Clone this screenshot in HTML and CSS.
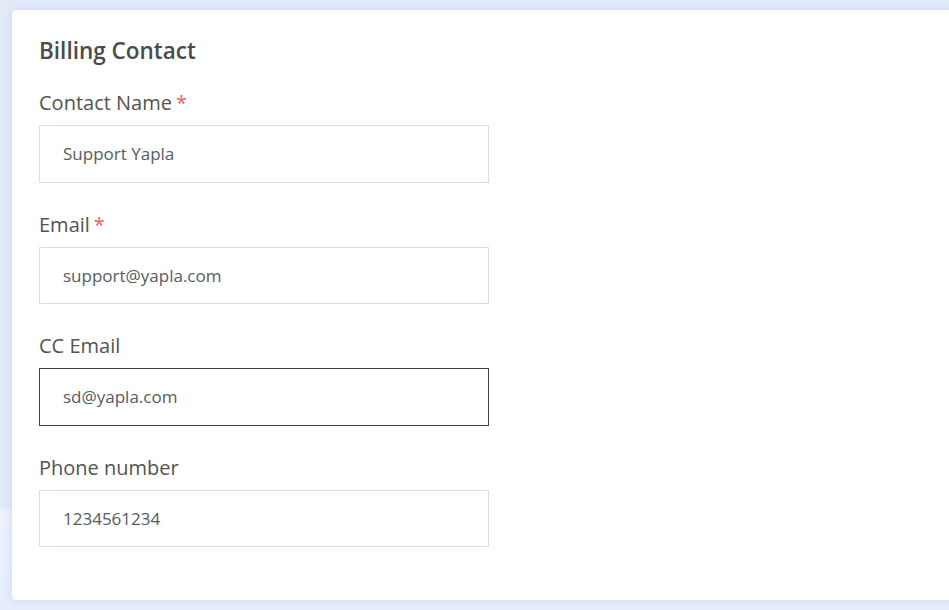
FILE: index.html
```html
<!DOCTYPE html>
<html lang="en">
<head>
<meta charset="utf-8">
<title>Billing Contact</title>
<link rel="stylesheet" href="styles.css">
</head>
<body>
<main class="page">
  <section class="card">
    <h2 class="card-title">Billing Contact</h2>
    <div class="field">
      <label class="field-label">Contact Name<span class="req">*</span></label>
      <div class="input">Support Yapla</div>
    </div>
    <div class="field">
      <label class="field-label">Email<span class="req">*</span></label>
      <div class="input">support@yapla.com</div>
    </div>
    <div class="field">
      <label class="field-label">CC Email</label>
      <div class="input input-focus">sd@yapla.com</div>
    </div>
    <div class="field">
      <label class="field-label">Phone number</label>
      <div class="input">1234561234</div>
    </div>
  </section>
</main>
</body>
</html>
```

FILE: styles.css
```css
html, body {
  margin: 0;
  padding: 0;
  height: 100%;
  overflow: hidden;
}
body {
  background: linear-gradient(180deg, #e4ebf8 0%, #e4ebf8 83%, #edf2fc 84%, #e6edfb 100%);
  font-family: "Open Sans", "Noto Sans", sans-serif;
}
.page {
  padding: 10px 0 0 12px;
}
.card {
  width: 1000px;
  height: 590px;
  box-sizing: border-box;
  background: #fff;
  border-radius: 4px;
  box-shadow: 0 0 8px rgba(150, 175, 225, 0.35);
  padding: 26px 27px 24px 27px;
}
.card-title {
  margin: 0 0 24px 0;
  font-size: 22.5px;
  line-height: 30px;
  font-weight: 600;
  color: #4a4b4d;
}
.field {
  margin-bottom: 29px;
}
.field-label {
  display: block;
  font-size: 20px;
  line-height: 26px;
  font-weight: 500;
  color: #535353;
  margin-bottom: 9px;
}
.req {
  color: #ee6060;
  margin-left: 4px;
}
.input {
  width: 450px;
  height: 57.5px;
  box-sizing: border-box;
  border: 1px solid #d6deea;
  padding: 0 23px;
  display: flex;
  align-items: center;
  font-size: 17px;
  color: #555b66;
}
.input-focus {
  border-color: #404040;
}
```
